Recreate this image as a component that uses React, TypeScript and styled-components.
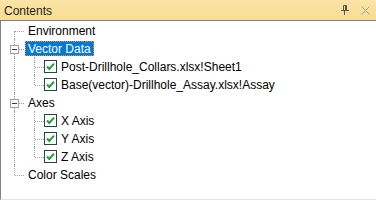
import React from "react";
import styled, { createGlobalStyle, css } from "styled-components";

const GlobalStyle = createGlobalStyle`
  html, body {
    margin: 0;
    padding: 0;
    background: #ffffff;
  }
  body {
    font-family: "Liberation Sans", Arial, sans-serif;
  }
`;

const Pane = styled.div`
  width: 376px;
  height: 202px;
  display: flex;
  flex-direction: column;
  background: #ffffff;
`;

const TitleBar = styled.div`
  height: 20px;
  display: flex;
  align-items: center;
  padding: 0 6px 0 4px;
  background: linear-gradient(#fae5a7, #f8dc90);
  color: #1e1e1e;
  font-size: 12px;
`;

const Title = styled.div`
  flex: 1;
  padding-top: 1px;
`;

const TitleButtons = styled.div`
  display: flex;
  align-items: center;
  gap: 12px;
`;

const Body = styled.div`
  width: 372px;
  height: 178px;
  border-top: 1px solid #828282;
  border-left: 1px solid #828282;
  border-right: 1px solid #e3e3e3;
  border-bottom: 1px solid #e3e3e3;
  background: #ffffff;
  padding-left: 3px;
  box-sizing: content-box;
`;

const Row = styled.div`
  height: 18px;
  display: flex;
  align-items: center;
`;

type Vert = "full" | "upper" | "lower" | "none";

const Guide = styled.span<{ $v: Vert; $h?: boolean }>`
  position: relative;
  width: 20px;
  height: 18px;
  flex: none;
  &::before {
    content: "";
    position: absolute;
    left: 10px;
    border-left: 1px dotted #a0a0a0;
    ${(p) =>
      p.$v === "full"
        ? css`top: 0; bottom: 0;`
        : p.$v === "upper"
        ? css`top: 0; height: 10px;`
        : p.$v === "lower"
        ? css`top: 10px; bottom: 0;`
        : css`display: none;`}
  }
  &::after {
    content: "";
    position: absolute;
    left: 11px;
    right: 0;
    top: 10px;
    border-top: 1px dotted #a0a0a0;
    display: ${(p) => (p.$h ? "block" : "none")};
  }
`;

const Expander = styled.span`
  position: absolute;
  left: 6px;
  top: 6px;
  width: 7px;
  height: 7px;
  border: 1px solid #a3a3a3;
  background: #ffffff;
  z-index: 1;
  &::after {
    content: "";
    position: absolute;
    left: 1px;
    right: 1px;
    top: 3px;
    height: 1px;
    background: #2b3e5f;
  }
`;

const Label = styled.span<{ $selected?: boolean; $gap?: number }>`
  margin-left: ${(p) => p.$gap ?? 1}px;
  height: 15px;
  line-height: 14px;
  padding: 0 2px;
  font-size: 12px;
  color: #000000;
  white-space: nowrap;
  box-sizing: border-box;
  border: 1px solid transparent;
  ${(p) =>
    p.$selected &&
    css`
      background: #0078d7;
      color: #ffffff;
      border: 1px dotted #ff8728;
    `}
`;

const Check = () => (
  <svg width="13" height="13" viewBox="0 0 13 13" style={{ flex: "none" }}>
    <rect x="0.5" y="0.5" width="12" height="12" fill="#ffffff" stroke="#2f3f58" />
    <path d="M3 6.5 L5.3 9 L10 3.6" fill="none" stroke="#1fa038" strokeWidth="2" />
  </svg>
);

const PinIcon = () => (
  <svg width="8" height="10" viewBox="0 0 8 10">
    <path d="M2.5 0.5 H5.5 V5.5 M2.5 0.5 V5.5" fill="none" stroke="#555555" />
    <rect x="0" y="5" width="8" height="1" fill="#555555" />
    <rect x="3" y="6" width="1" height="4" fill="#555555" />
    <rect x="4" y="0" width="1.5" height="5" fill="#555555" />
  </svg>
);

const CloseIcon = () => (
  <svg width="9" height="9" viewBox="0 0 9 9">
    <path d="M0.5 0.5 L8.5 8.5 M8.5 0.5 L0.5 8.5" stroke="#9c9c9c" strokeWidth="1" />
  </svg>
);

type Node = {
  label: string;
  selected?: boolean;
  children?: string[];
};

const tree: Node[] = [
  { label: "Environment" },
  {
    label: "Vector Data",
    selected: true,
    children: [
      "Post-Drillhole_Collars.xlsx!Sheet1",
      "Base(vector)-Drillhole_Assay.xlsx!Assay",
    ],
  },
  { label: "Axes", children: ["X Axis", "Y Axis", "Z Axis"] },
  { label: "Color Scales" },
];

export default function App() {
  const rows: React.ReactNode[] = [];
  tree.forEach((node, i) => {
    const first = i === 0;
    const last = i === tree.length - 1;
    const v: Vert = first ? "lower" : last ? "upper" : "full";
    rows.push(
      <Row key={node.label}>
        <Guide $v={v} $h>
          {node.children && <Expander />}
        </Guide>
        <Label $selected={node.selected}>{node.label}</Label>
      </Row>
    );
    node.children?.forEach((child, j) => {
      const lastChild = j === node.children!.length - 1;
      rows.push(
        <Row key={child}>
          <Guide $v={last ? "none" : "full"} />
          <Guide $v={lastChild ? "upper" : "full"} $h />
          <Check />
          <Label $gap={1}>{child}</Label>
        </Row>
      );
    });
  });

  return (
    <>
      <GlobalStyle />
      <Pane>
        <TitleBar>
          <Title>Contents</Title>
          <TitleButtons>
            <PinIcon />
            <CloseIcon />
          </TitleButtons>
        </TitleBar>
        <Body>{rows}</Body>
      </Pane>
    </>
  );
}
